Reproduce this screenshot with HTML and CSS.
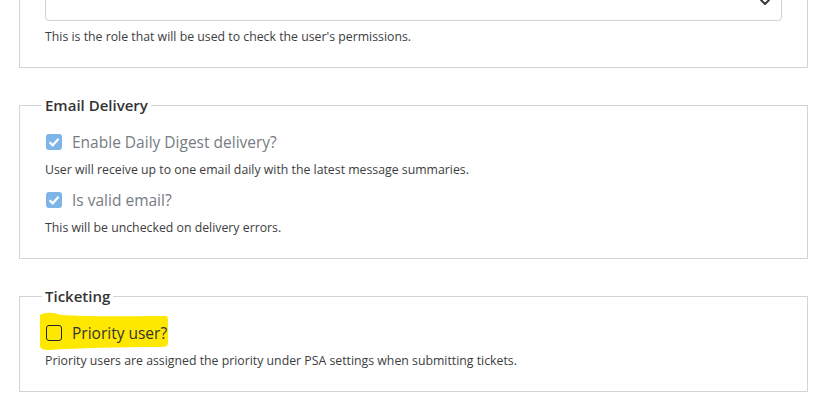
FILE: index.html
```html
<!DOCTYPE html>
<html lang="en">
<head>
<meta charset="utf-8">
<title>User settings</title>
<link rel="stylesheet" href="styles.css">
</head>
<body>
<div class="page">
  <fieldset class="group group-role">
    <div class="select">
      <span class="select-value"></span>
      <svg class="select-caret" width="12" height="8" viewBox="0 0 12 8"><path d="M2 2 L6 6 L10 2" fill="none" stroke="#343a40" stroke-width="2" stroke-linecap="round" stroke-linejoin="round"/></svg>
    </div>
    <p class="help">This is the role that will be used to check the user's permissions.</p>
  </fieldset>

  <fieldset class="group">
    <legend class="group-title">Email Delivery</legend>
    <div class="check-row first">
      <span class="box box-checked"><svg width="16" height="16" viewBox="0 0 16 16"><path d="M3.6 8.2 L6.7 11.3 L12.6 4.7" fill="none" stroke="#fff" stroke-width="2.2"/></svg></span>
      <span class="check-label muted">Enable Daily Digest delivery?</span>
    </div>
    <p class="help">User will receive up to one email daily with the latest message summaries.</p>
    <div class="check-row">
      <span class="box box-checked"><svg width="16" height="16" viewBox="0 0 16 16"><path d="M3.6 8.2 L6.7 11.3 L12.6 4.7" fill="none" stroke="#fff" stroke-width="2.2"/></svg></span>
      <span class="check-label muted">Is valid email?</span>
    </div>
    <p class="help">This will be unchecked on delivery errors.</p>
  </fieldset>

  <fieldset class="group">
    <legend class="group-title">Ticketing</legend>
    <div class="check-row first highlighted">
      <svg class="marker" width="132" height="40" viewBox="0 0 132 40"><path d="M1 3 C6 0 14 0 22 3 C50 5 90 4 126 4 C129 4 129 6 129 10 L129 31 C129 34 127 35 120 35 C80 35 40 36 10 38 C4 38 1 37 1 33 Z" fill="#ffe800"/></svg>
      <span class="box"></span>
      <span class="check-label">Priority user?</span>
    </div>
    <p class="help">Priority users are assigned the priority under PSA settings when submitting tickets.</p>
  </fieldset>
</div>
</body>
</html>
```

FILE: styles.css
```css
html, body {
  margin: 0;
  padding: 0;
  background: #ffffff;
}

body {
  font-family: "Segoe UI", "Open Sans", "Noto Sans", sans-serif;
  color: #333333;
  overflow: hidden;
}

.page {
  padding: 0 12px 0 19px;
}

.group {
  margin: 27px 0 0 0;
  padding: 0 25px 21px 25px;
  border: 1px solid #d3d3da;
  min-width: 0;
}

.group-role {
  margin-top: -36px;
  padding-top: 15px;
}

.group-title {
  padding: 0 3px;
  margin-left: -3px;
  font-size: 15px;
  line-height: 20px;
  font-weight: 600;
  color: #333333;
}

.select {
  height: 39px;
  border: 1px solid #ced4da;
  border-radius: 4px;
  display: flex;
  align-items: center;
  justify-content: flex-end;
  padding: 0 10px;
}

.select-caret {
  display: block;
  margin-top: 2px;
}

.help {
  margin: 7px 0 0 0;
  font-size: 12.3px;
  line-height: 18px;
  color: #3d3d3d;
}

.check-row {
  position: relative;
  display: flex;
  align-items: center;
  height: 24px;
  margin-top: 9px;
  padding-left: 1px;
}

.check-row.first {
  margin-top: 15px;
}

.box {
  position: relative;
  width: 16px;
  height: 16px;
  box-sizing: border-box;
  border: 1px solid #222;
  border-radius: 3px;
  flex: none;
}

.box svg {
  display: block;
}

.box-checked {
  border: none;
  background: #7db5e8;
}

.check-label {
  position: relative;
  margin-left: 10px;
  font-size: 15.5px;
  line-height: 24px;
  color: #333333;
}

.check-label.muted {
  color: #767c82;
}

.marker {
  position: absolute;
  left: -6px;
  top: -9px;
}
```
